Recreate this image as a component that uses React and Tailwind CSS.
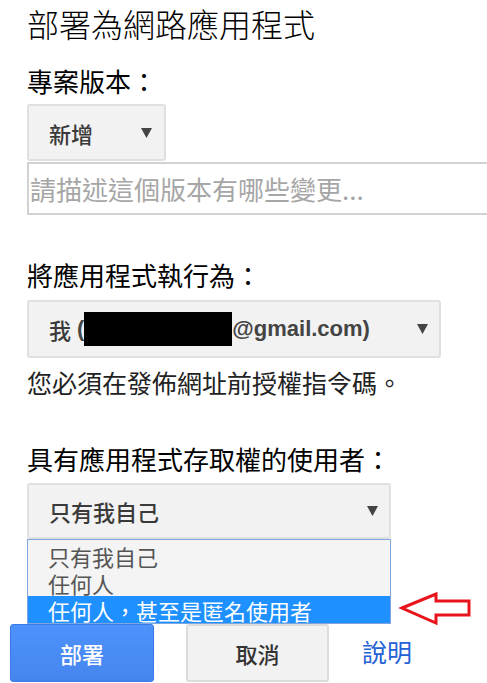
import React from "react";

const Arrow = () => (
  <svg width="11" height="10" viewBox="0 0 11 10" className="shrink-0">
    <polygon points="0,0 11,0 5.5,10" fill="#444" />
  </svg>
);

export default function App() {
  return (
    <div className="relative w-[487px] h-[683px] overflow-hidden bg-white font-['Noto_Sans_CJK_TC','Noto_Sans_CJK_SC',sans-serif] text-black">
      <div className="pl-[27px] pt-[7px]">
        <h1 className="text-[32px] leading-[32px] font-light whitespace-nowrap">部署為網路應用程式</h1>

        <div className="mt-[29px] text-[26px] leading-[26px] whitespace-nowrap">專案版本：</div>

        <div className="mt-[10px] w-[139px] h-[57px] flex items-center justify-between pl-[20px] pr-[12px] bg-[#f2f2f2] border-2 border-[#e0e0e0] rounded-[3px]">
          <span className="text-[22px] leading-[22px] font-medium text-[#3a3a3a]">新增</span>
          <Arrow />
        </div>

        <div className="mt-[1px] w-[480px] h-[53px] border-2 border-[#d2d2d2] flex items-center pl-[1px]">
          <span className="text-[26px] leading-[26px] text-[#a6a6a6] whitespace-nowrap">請描述這個版本有哪些變更...</span>
        </div>

        <div className="mt-[47px] text-[26px] leading-[26px] whitespace-nowrap">將應用程式執行為：</div>

        <div className="mt-[12px] w-[414px] h-[58px] flex items-center justify-between pl-[20px] pr-[11px] bg-[#f2f2f2] border-2 border-[#e0e0e0] rounded-[3px]">
          <span className="flex items-center text-[22px] leading-[22px] font-medium text-[#3a3a3a] whitespace-nowrap">
            <span>我</span>
            <span className="font-['Liberation_Sans',sans-serif] font-bold text-[#444] ml-[6px]">(</span>
            <span className="inline-block w-[148px] h-[34px] bg-black"></span>
            <span className="font-['Liberation_Sans',sans-serif] font-bold text-[#444]">@gmail.com)</span>
          </span>
          <Arrow />
        </div>

        <div className="mt-[11px] text-[25px] leading-[26px] text-[#222] whitespace-nowrap">您必須在發佈網址前授權指令碼。</div>

        <div className="mt-[51px] text-[26px] leading-[26px] whitespace-nowrap">具有應用程式存取權的使用者：</div>

        <div className="mt-[11px] w-[364px] h-[56px] flex items-center justify-between pl-[20px] pr-[11px] bg-[#f2f2f2] border-2 border-[#e0e0e0] rounded-[3px]">
          <span className="text-[22px] leading-[22px] font-medium text-[#3a3a3a] whitespace-nowrap">只有我自己</span>
          <Arrow />
        </div>

        <div className="w-[364px] h-[85px] border border-[#7da5de] bg-[#f4f4f4] pt-[2px] text-[22px] text-[#555]">
          <div className="pl-[20px] h-[27px] flex items-center whitespace-nowrap"><span className="leading-[22px]">只有我自己</span></div>
          <div className="pl-[20px] h-[27px] flex items-center whitespace-nowrap"><span className="leading-[22px]">任何人</span></div>
          <div className="pl-[20px] h-[27px] flex items-center whitespace-nowrap bg-[#1e90ff] text-white"><span className="leading-[22px]">任何人，甚至是匿名使用者</span></div>
        </div>
      </div>

      <div className="flex items-center pl-[10px]">
        <button className="w-[144px] h-[58px] rounded-[3px] border border-[#3a7ae6] bg-gradient-to-b from-[#4e92fb] to-[#4585ee] text-white text-[22px] font-medium">部署</button>
        <button className="ml-[32px] w-[143px] h-[58px] rounded-[3px] border-2 border-[#dcdcdc] bg-[#f2f2f2] text-[#333] text-[22px] font-medium">取消</button>
        <span className="ml-[33px] -mt-[4px] text-[25px] leading-[26px] text-[#2461d6]">說明</span>
      </div>

      <svg className="absolute left-[398px] top-[590px]" width="76" height="38" viewBox="398 590 76 38">
        <polygon points="402,608 436,594 436,601 469,601 469,615 436,615 436,623" fill="none" stroke="#e8141b" strokeWidth="3" strokeLinejoin="miter" />
      </svg>
    </div>
  );
}
